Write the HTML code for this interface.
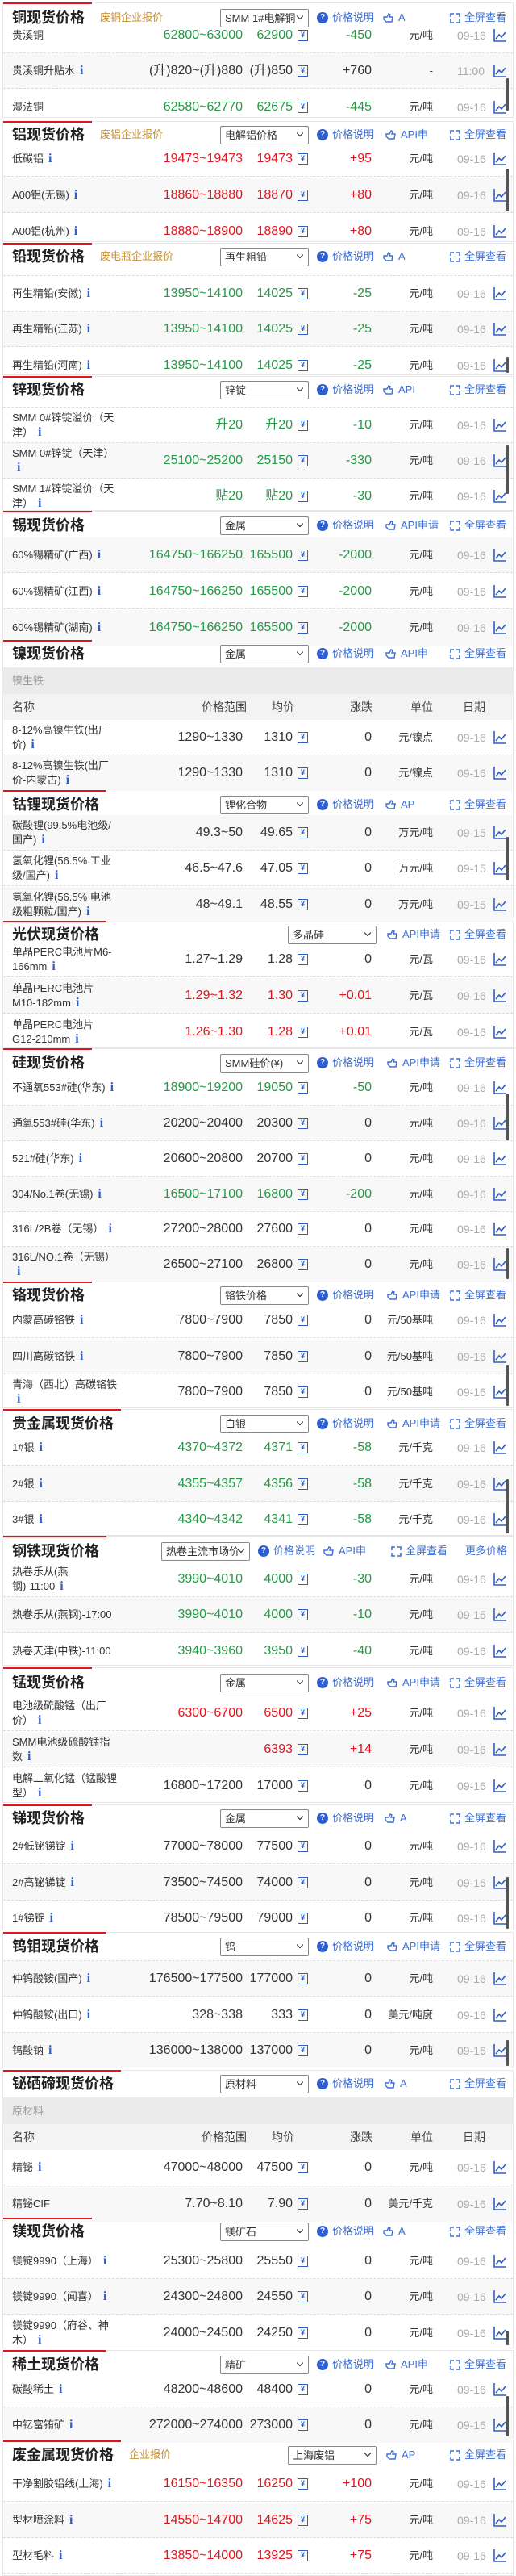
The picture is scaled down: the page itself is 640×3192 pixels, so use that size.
<!DOCTYPE html>
<html><head><meta charset="utf-8">
<style>
*{margin:0;padding:0;box-sizing:border-box}
body{width:640px;height:3192px;position:relative;background:#fff;font-family:"Liberation Sans","Noto Sans CJK SC",sans-serif;color:#333;overflow:hidden}
.s{position:absolute;left:3px;width:634px;border:1px solid #e6e6e6;background:#fff}
.rl{position:absolute;left:4px;height:2px;background:#e3141d;z-index:3}
.t{position:absolute;left:15px;font-size:18px;font-weight:bold;line-height:24px;color:#222;z-index:3}
.o{position:absolute;left:124px;font-size:13px;line-height:20px;color:#c8902e;z-index:3}
.sel{position:absolute;left:273px;width:110px;height:23px;border:1px solid #888;border-radius:2px;font-size:13px;line-height:21px;padding-left:5px;color:#333;background:#fff;z-index:3;overflow:hidden;white-space:nowrap}
.sel:after{content:"";position:absolute;right:7px;top:5px;width:5px;height:5px;border-right:1.5px solid #222;border-bottom:1.5px solid #222;transform:rotate(45deg)}
.lk{position:absolute;font-size:13px;line-height:20px;color:#3d6fd4;white-space:nowrap;z-index:3;display:flex;align-items:center}
.q{display:inline-block;width:14px;height:14px;border-radius:50%;background:#2d5fd0;color:#fff;font-size:10px;font-weight:bold;line-height:14px;text-align:center;font-style:normal;margin-right:5px}
.lk svg{margin-right:5px}
.r{position:absolute;left:4px;width:632px;height:44px;border-bottom:1px dashed #dcdcdc;z-index:1}
.r.b{background:#f8f8f8}
.r.e{border-bottom:none}
.r>div{position:absolute;top:0;height:44px;line-height:44px;white-space:nowrap}
.r .n{left:11px;width:130px;white-space:normal;display:flex;align-items:center;font-size:13px;line-height:18px;color:#333}
.r .p{left:0;width:297px;text-align:right;font-size:16px}
.r .a{left:0;width:359px;text-align:right;font-size:16px}
.r .c{left:0;width:457px;text-align:right;font-size:16px}
.r .u{left:0;width:533px;text-align:right;font-size:13px}
.r .d{left:563px;font-size:14px;color:#aaa}
.g .p,.g .a,.g .c{color:#239a45}
.rd .p,.rd .a,.rd .c{color:#e5121c}
.y{position:absolute;left:365px;top:15px;width:13px;height:14px;border:1.5px solid #2f5fc0;font-size:9px;line-height:11px;text-align:center;color:#2f5fc0;font-style:normal;font-weight:bold}
.k{position:absolute;left:608px;top:14px}
.i{font-family:"Liberation Serif",serif;color:#2f5fc8;font-weight:bold;font-size:16px;margin-left:6px}
.dl{position:absolute;left:4px;width:632px;border-top:1px dashed #dcdcdc;z-index:2}
.sub{position:absolute;left:4px;width:632px;height:33px;background:#ebebeb;font-size:13px;line-height:33px;color:#999;padding-left:11px;z-index:2}
.hd{position:absolute;left:4px;width:632px;height:32px;background:#f3f3f3;font-size:14px;line-height:32px;color:#444;z-index:2}
.hd span{position:absolute;top:0}
.sb{position:absolute;left:628px;width:3px;background:#555;z-index:4;border-radius:1px}
</style></head><body>

<!-- 1 铜 -->
<div class="s" style="top:3px;height:143px"></div>
<div class="rl" style="top:3px;width:110px"></div>
<div class="t" style="top:10px">铜现货价格</div>
<div class="o" style="top:12px">废铜企业报价</div>
<div class="sel" style="top:11px">SMM 1#电解铜</div>
<div class="lk" style="top:12px;left:393px"><i class="q">?</i>价格说明</div>
<div class="lk" style="top:12px;left:475px"><svg width="14" height="14" viewBox="0 0 14 14"><path d="M1 6h4l2-4 2 1-1 3h4l-1 6H4L1 9z" fill="none" stroke="#3d6fd4" stroke-width="1.4"/></svg>A</div>
<div class="lk" style="top:12px;left:558px"><svg width="13" height="13" viewBox="0 0 13 13"><path d="M1 5V1h4M8 1h4v4M12 8v4H8M5 12H1V8" fill="none" stroke="#3d6fd4" stroke-width="1.6"/></svg>全屏查看</div>
<div class="r g" style="top:22px"><div class="n">贵溪铜</div><div class="p">62800~63000</div><div class="a">62900</div><i class="y">¥</i><div class="c">-450</div><div class="u">元/吨</div><div class="d">09-16</div><svg class="k" width="16" height="16" viewBox="0 0 16 16"><path d="M1 0v15h15M3 12l4-5 3 3 5-6" fill="none" stroke="#2f5fc0" stroke-width="1.6"/></svg></div>
<div class="r b" style="top:66px"><div class="n">贵溪铜升贴水<b class="i">i</b></div><div class="p">(升)820~(升)880</div><div class="a">(升)850</div><i class="y">¥</i><div class="c">+760</div><div class="u">-</div><div class="d">11:00</div><svg class="k" width="16" height="16" viewBox="0 0 16 16"><path d="M1 0v15h15M3 12l4-5 3 3 5-6" fill="none" stroke="#2f5fc0" stroke-width="1.6"/></svg></div>
<div class="r g e" style="top:111px"><div class="n">湿法铜</div><div class="p">62580~62770</div><div class="a">62675</div><i class="y">¥</i><div class="c">-445</div><div class="u">元/吨</div><div class="d">09-16</div><svg class="k" width="16" height="16" viewBox="0 0 16 16"><path d="M1 0v15h15M3 12l4-5 3 3 5-6" fill="none" stroke="#2f5fc0" stroke-width="1.6"/></svg></div>
<div class="sb" style="top:97px;height:40px"></div>

<!-- 2 铝 -->
<div class="s" style="top:150px;height:150px"></div>
<div class="rl" style="top:150px;width:110px"></div>
<div class="t" style="top:155px">铝现货价格</div>
<div class="o" style="top:157px">废铝企业报价</div>
<div class="sel" style="top:156px">电解铝价格</div>
<div class="lk" style="top:157px;left:393px"><i class="q">?</i>价格说明</div>
<div class="lk" style="top:157px;left:478px"><svg width="14" height="14" viewBox="0 0 14 14"><path d="M1 6h4l2-4 2 1-1 3h4l-1 6H4L1 9z" fill="none" stroke="#3d6fd4" stroke-width="1.4"/></svg>API申</div>
<div class="lk" style="top:157px;left:558px"><svg width="13" height="13" viewBox="0 0 13 13"><path d="M1 5V1h4M8 1h4v4M12 8v4H8M5 12H1V8" fill="none" stroke="#3d6fd4" stroke-width="1.6"/></svg>全屏查看</div>
<div class="r rd" style="top:175px"><div class="n">低碳铝<b class="i">i</b></div><div class="p">19473~19473</div><div class="a">19473</div><i class="y">¥</i><div class="c">+95</div><div class="u">元/吨</div><div class="d">09-16</div><svg class="k" width="16" height="16" viewBox="0 0 16 16"><path d="M1 0v15h15M3 12l4-5 3 3 5-6" fill="none" stroke="#2f5fc0" stroke-width="1.6"/></svg></div>
<div class="r rd b" style="top:220px"><div class="n">A00铝(无锡)<b class="i">i</b></div><div class="p">18860~18880</div><div class="a">18870</div><i class="y">¥</i><div class="c">+80</div><div class="u">元/吨</div><div class="d">09-16</div><svg class="k" width="16" height="16" viewBox="0 0 16 16"><path d="M1 0v15h15M3 12l4-5 3 3 5-6" fill="none" stroke="#2f5fc0" stroke-width="1.6"/></svg></div>
<div class="r rd e" style="top:265px"><div class="n">A00铝(杭州)<b class="i">i</b></div><div class="p">18880~18900</div><div class="a">18890</div><i class="y">¥</i><div class="c">+80</div><div class="u">元/吨</div><div class="d">09-16</div><svg class="k" width="16" height="16" viewBox="0 0 16 16"><path d="M1 0v15h15M3 12l4-5 3 3 5-6" fill="none" stroke="#2f5fc0" stroke-width="1.6"/></svg></div>
<div class="sb" style="top:209px;height:53px"></div>

<!-- 3 铅 -->
<div class="s" style="top:301px;height:164px"></div>
<div class="rl" style="top:301px;width:110px"></div>
<div class="t" style="top:306px">铅现货价格</div>
<div class="o" style="top:308px">废电瓶企业报价</div>
<div class="sel" style="top:307px">再生粗铅</div>
<div class="lk" style="top:308px;left:393px"><i class="q">?</i>价格说明</div>
<div class="lk" style="top:308px;left:475px"><svg width="14" height="14" viewBox="0 0 14 14"><path d="M1 6h4l2-4 2 1-1 3h4l-1 6H4L1 9z" fill="none" stroke="#3d6fd4" stroke-width="1.4"/></svg>A</div>
<div class="lk" style="top:308px;left:558px"><svg width="13" height="13" viewBox="0 0 13 13"><path d="M1 5V1h4M8 1h4v4M12 8v4H8M5 12H1V8" fill="none" stroke="#3d6fd4" stroke-width="1.6"/></svg>全屏查看</div>
<div class="dl" style="top:341px"></div>
<div class="r g" style="top:342px"><div class="n">再生精铅(安徽)<b class="i">i</b></div><div class="p">13950~14100</div><div class="a">14025</div><i class="y">¥</i><div class="c">-25</div><div class="u">元/吨</div><div class="d">09-16</div><svg class="k" width="16" height="16" viewBox="0 0 16 16"><path d="M1 0v15h15M3 12l4-5 3 3 5-6" fill="none" stroke="#2f5fc0" stroke-width="1.6"/></svg></div>
<div class="r g b" style="top:386px"><div class="n">再生精铅(江苏)<b class="i">i</b></div><div class="p">13950~14100</div><div class="a">14025</div><i class="y">¥</i><div class="c">-25</div><div class="u">元/吨</div><div class="d">09-16</div><svg class="k" width="16" height="16" viewBox="0 0 16 16"><path d="M1 0v15h15M3 12l4-5 3 3 5-6" fill="none" stroke="#2f5fc0" stroke-width="1.6"/></svg></div>
<div class="r g e" style="top:431px"><div class="n">再生精铅(河南)<b class="i">i</b></div><div class="p">13950~14100</div><div class="a">14025</div><i class="y">¥</i><div class="c">-25</div><div class="u">元/吨</div><div class="d">09-16</div><svg class="k" width="16" height="16" viewBox="0 0 16 16"><path d="M1 0v15h15M3 12l4-5 3 3 5-6" fill="none" stroke="#2f5fc0" stroke-width="1.6"/></svg></div>
<div class="sb" style="top:442px;height:20px"></div>

<!-- 4 锌 -->
<div class="s" style="top:466px;height:167px"></div>
<div class="rl" style="top:466px;width:110px"></div>
<div class="t" style="top:471px">锌现货价格</div>
<div class="sel" style="top:472px">锌锭</div>
<div class="lk" style="top:473px;left:393px"><i class="q">?</i>价格说明</div>
<div class="lk" style="top:473px;left:475px"><svg width="14" height="14" viewBox="0 0 14 14"><path d="M1 6h4l2-4 2 1-1 3h4l-1 6H4L1 9z" fill="none" stroke="#3d6fd4" stroke-width="1.4"/></svg>API</div>
<div class="lk" style="top:473px;left:558px"><svg width="13" height="13" viewBox="0 0 13 13"><path d="M1 5V1h4M8 1h4v4M12 8v4H8M5 12H1V8" fill="none" stroke="#3d6fd4" stroke-width="1.6"/></svg>全屏查看</div>
<div class="dl" style="top:504px"></div>
<div class="r g" style="top:505px"><div class="n"><span>SMM 0#锌锭溢价（天津）<b class="i">i</b></span></div><div class="p">升20</div><div class="a">升20</div><i class="y">¥</i><div class="c">-10</div><div class="u">元/吨</div><div class="d">09-16</div><svg class="k" width="16" height="16" viewBox="0 0 16 16"><path d="M1 0v15h15M3 12l4-5 3 3 5-6" fill="none" stroke="#2f5fc0" stroke-width="1.6"/></svg></div>
<div class="r g b" style="top:549px"><div class="n"><span>SMM 0#锌锭（天津）<b class="i">i</b></span></div><div class="p">25100~25200</div><div class="a">25150</div><i class="y">¥</i><div class="c">-330</div><div class="u">元/吨</div><div class="d">09-16</div><svg class="k" width="16" height="16" viewBox="0 0 16 16"><path d="M1 0v15h15M3 12l4-5 3 3 5-6" fill="none" stroke="#2f5fc0" stroke-width="1.6"/></svg></div>
<div class="r g e" style="top:593px"><div class="n"><span>SMM 1#锌锭溢价（天津）<b class="i">i</b></span></div><div class="p">贴20</div><div class="a">贴20</div><i class="y">¥</i><div class="c">-30</div><div class="u">元/吨</div><div class="d">09-16</div><svg class="k" width="16" height="16" viewBox="0 0 16 16"><path d="M1 0v15h15M3 12l4-5 3 3 5-6" fill="none" stroke="#2f5fc0" stroke-width="1.6"/></svg></div>
<div class="sb" style="top:552px;height:60px"></div>

<!-- 5 锡 -->
<div class="s" style="top:633px;height:160px"></div>
<div class="rl" style="top:633px;width:110px"></div>
<div class="t" style="top:639px">锡现货价格</div>
<div class="sel" style="top:640px">金属</div>
<div class="lk" style="top:641px;left:393px"><i class="q">?</i>价格说明</div>
<div class="lk" style="top:641px;left:478px"><svg width="14" height="14" viewBox="0 0 14 14"><path d="M1 6h4l2-4 2 1-1 3h4l-1 6H4L1 9z" fill="none" stroke="#3d6fd4" stroke-width="1.4"/></svg>API申请</div>
<div class="lk" style="top:641px;left:558px"><svg width="13" height="13" viewBox="0 0 13 13"><path d="M1 5V1h4M8 1h4v4M12 8v4H8M5 12H1V8" fill="none" stroke="#3d6fd4" stroke-width="1.6"/></svg>全屏查看</div>
<div class="r g b" style="top:666px"><div class="n">60%锡精矿(广西)<b class="i">i</b></div><div class="p">164750~166250</div><div class="a">165500</div><i class="y">¥</i><div class="c">-2000</div><div class="u">元/吨</div><div class="d">09-16</div><svg class="k" width="16" height="16" viewBox="0 0 16 16"><path d="M1 0v15h15M3 12l4-5 3 3 5-6" fill="none" stroke="#2f5fc0" stroke-width="1.6"/></svg></div>
<div class="r g" style="top:711px"><div class="n">60%锡精矿(江西)<b class="i">i</b></div><div class="p">164750~166250</div><div class="a">165500</div><i class="y">¥</i><div class="c">-2000</div><div class="u">元/吨</div><div class="d">09-16</div><svg class="k" width="16" height="16" viewBox="0 0 16 16"><path d="M1 0v15h15M3 12l4-5 3 3 5-6" fill="none" stroke="#2f5fc0" stroke-width="1.6"/></svg></div>
<div class="r g b e" style="top:756px"><div class="n">60%锡精矿(湖南)<b class="i">i</b></div><div class="p">164750~166250</div><div class="a">165500</div><i class="y">¥</i><div class="c">-2000</div><div class="u">元/吨</div><div class="d">09-16</div><svg class="k" width="16" height="16" viewBox="0 0 16 16"><path d="M1 0v15h15M3 12l4-5 3 3 5-6" fill="none" stroke="#2f5fc0" stroke-width="1.6"/></svg></div>

<!-- 6 镍 -->
<div class="s" style="top:793px;height:186px"></div>
<div class="rl" style="top:793px;width:110px"></div>
<div class="t" style="top:798px">镍现货价格</div>
<div class="sel" style="top:799px">金属</div>
<div class="lk" style="top:800px;left:393px"><i class="q">?</i>价格说明</div>
<div class="lk" style="top:800px;left:478px"><svg width="14" height="14" viewBox="0 0 14 14"><path d="M1 6h4l2-4 2 1-1 3h4l-1 6H4L1 9z" fill="none" stroke="#3d6fd4" stroke-width="1.4"/></svg>API申</div>
<div class="lk" style="top:800px;left:558px"><svg width="13" height="13" viewBox="0 0 13 13"><path d="M1 5V1h4M8 1h4v4M12 8v4H8M5 12H1V8" fill="none" stroke="#3d6fd4" stroke-width="1.6"/></svg>全屏查看</div>
<div class="sub" style="top:827px">镍生铁</div>
<div class="hd" style="top:860px"><span style="left:11px">名称</span><span style="left:246px">价格范围</span><span style="left:333px">均价</span><span style="left:430px">涨跌</span><span style="left:505px">单位</span><span style="left:570px">日期</span></div>
<div class="r" style="top:892px"><div class="n"><span>8-12%高镍生铁(出厂价)<b class="i">i</b></span></div><div class="p">1290~1330</div><div class="a">1310</div><i class="y">¥</i><div class="c">0</div><div class="u">元/镍点</div><div class="d">09-16</div><svg class="k" width="16" height="16" viewBox="0 0 16 16"><path d="M1 0v15h15M3 12l4-5 3 3 5-6" fill="none" stroke="#2f5fc0" stroke-width="1.6"/></svg></div>
<div class="r b e" style="top:936px"><div class="n"><span>8-12%高镍生铁(出厂价-内蒙古)<b class="i">i</b></span></div><div class="p">1290~1330</div><div class="a">1310</div><i class="y">¥</i><div class="c">0</div><div class="u">元/镍点</div><div class="d">09-16</div><svg class="k" width="16" height="16" viewBox="0 0 16 16"><path d="M1 0v15h15M3 12l4-5 3 3 5-6" fill="none" stroke="#2f5fc0" stroke-width="1.6"/></svg></div>

<!-- 7 钴锂 -->
<div class="s" style="top:979px;height:158px"></div>
<div class="rl" style="top:979px;width:128px"></div>
<div class="t" style="top:985px">钴锂现货价格</div>
<div class="sel" style="top:986px">锂化合物</div>
<div class="lk" style="top:987px;left:393px"><i class="q">?</i>价格说明</div>
<div class="lk" style="top:987px;left:478px"><svg width="14" height="14" viewBox="0 0 14 14"><path d="M1 6h4l2-4 2 1-1 3h4l-1 6H4L1 9z" fill="none" stroke="#3d6fd4" stroke-width="1.4"/></svg>AP</div>
<div class="lk" style="top:987px;left:558px"><svg width="13" height="13" viewBox="0 0 13 13"><path d="M1 5V1h4M8 1h4v4M12 8v4H8M5 12H1V8" fill="none" stroke="#3d6fd4" stroke-width="1.6"/></svg>全屏查看</div>
<div class="r b" style="top:1010px"><div class="n"><span>碳酸锂(99.5%电池级/国产)<b class="i">i</b></span></div><div class="p">49.3~50</div><div class="a">49.65</div><i class="y">¥</i><div class="c">0</div><div class="u">万元/吨</div><div class="d">09-15</div><svg class="k" width="16" height="16" viewBox="0 0 16 16"><path d="M1 0v15h15M3 12l4-5 3 3 5-6" fill="none" stroke="#2f5fc0" stroke-width="1.6"/></svg></div>
<div class="r" style="top:1054px"><div class="n"><span>氢氧化锂(56.5% 工业级/国产)<b class="i">i</b></span></div><div class="p">46.5~47.6</div><div class="a">47.05</div><i class="y">¥</i><div class="c">0</div><div class="u">万元/吨</div><div class="d">09-15</div><svg class="k" width="16" height="16" viewBox="0 0 16 16"><path d="M1 0v15h15M3 12l4-5 3 3 5-6" fill="none" stroke="#2f5fc0" stroke-width="1.6"/></svg></div>
<div class="r b e" style="top:1099px"><div class="n"><span>氢氧化锂(56.5% 电池级粗颗粒/国产)<b class="i">i</b></span></div><div class="p">48~49.1</div><div class="a">48.55</div><i class="y">¥</i><div class="c">0</div><div class="u">万元/吨</div><div class="d">09-15</div><svg class="k" width="16" height="16" viewBox="0 0 16 16"><path d="M1 0v15h15M3 12l4-5 3 3 5-6" fill="none" stroke="#2f5fc0" stroke-width="1.6"/></svg></div>
<div class="sb" style="top:1037px;height:54px"></div>

<!-- 8 光伏 -->
<div class="s" style="top:1141px;height:157px"></div>
<div class="rl" style="top:1141px;width:128px"></div>
<div class="t" style="top:1146px">光伏现货价格</div>
<div class="sel" style="top:1147px;left:357px">多晶硅</div>
<div class="lk" style="top:1148px;left:480px"><svg width="14" height="14" viewBox="0 0 14 14"><path d="M1 6h4l2-4 2 1-1 3h4l-1 6H4L1 9z" fill="none" stroke="#3d6fd4" stroke-width="1.4"/></svg>API申请</div>
<div class="lk" style="top:1148px;left:558px"><svg width="13" height="13" viewBox="0 0 13 13"><path d="M1 5V1h4M8 1h4v4M12 8v4H8M5 12H1V8" fill="none" stroke="#3d6fd4" stroke-width="1.6"/></svg>全屏查看</div>
<div class="r" style="top:1167px"><div class="n"><span>单晶PERC电池片M6-166mm<b class="i">i</b></span></div><div class="p">1.27~1.29</div><div class="a">1.28</div><i class="y">¥</i><div class="c">0</div><div class="u">元/瓦</div><div class="d">09-16</div><svg class="k" width="16" height="16" viewBox="0 0 16 16"><path d="M1 0v15h15M3 12l4-5 3 3 5-6" fill="none" stroke="#2f5fc0" stroke-width="1.6"/></svg></div>
<div class="r rd b" style="top:1212px"><div class="n"><span>单晶PERC电池片M10-182mm<b class="i">i</b></span></div><div class="p">1.29~1.32</div><div class="a">1.30</div><i class="y">¥</i><div class="c">+0.01</div><div class="u">元/瓦</div><div class="d">09-16</div><svg class="k" width="16" height="16" viewBox="0 0 16 16"><path d="M1 0v15h15M3 12l4-5 3 3 5-6" fill="none" stroke="#2f5fc0" stroke-width="1.6"/></svg></div>
<div class="r rd e" style="top:1257px"><div class="n"><span>单晶PERC电池片G12-210mm<b class="i">i</b></span></div><div class="p">1.26~1.30</div><div class="a">1.28</div><i class="y">¥</i><div class="c">+0.01</div><div class="u">元/瓦</div><div class="d">09-16</div><svg class="k" width="16" height="16" viewBox="0 0 16 16"><path d="M1 0v15h15M3 12l4-5 3 3 5-6" fill="none" stroke="#2f5fc0" stroke-width="1.6"/></svg></div>

<!-- 9 硅 -->
<div class="s" style="top:1299px;height:288px"></div>
<div class="rl" style="top:1299px;width:110px"></div>
<div class="t" style="top:1305px">硅现货价格</div>
<div class="sel" style="top:1306px">SMM硅价(¥)</div>
<div class="lk" style="top:1307px;left:393px"><i class="q">?</i>价格说明</div>
<div class="lk" style="top:1307px;left:480px"><svg width="14" height="14" viewBox="0 0 14 14"><path d="M1 6h4l2-4 2 1-1 3h4l-1 6H4L1 9z" fill="none" stroke="#3d6fd4" stroke-width="1.4"/></svg>API申请</div>
<div class="lk" style="top:1307px;left:558px"><svg width="13" height="13" viewBox="0 0 13 13"><path d="M1 5V1h4M8 1h4v4M12 8v4H8M5 12H1V8" fill="none" stroke="#3d6fd4" stroke-width="1.6"/></svg>全屏查看</div>
<div class="r g" style="top:1326px"><div class="n"><span>不通氧553#硅(华东)<b class="i">i</b></span></div><div class="p">18900~19200</div><div class="a">19050</div><i class="y">¥</i><div class="c">-50</div><div class="u">元/吨</div><div class="d">09-16</div><svg class="k" width="16" height="16" viewBox="0 0 16 16"><path d="M1 0v15h15M3 12l4-5 3 3 5-6" fill="none" stroke="#2f5fc0" stroke-width="1.6"/></svg></div>
<div class="r b" style="top:1370px"><div class="n">通氧553#硅(华东)<b class="i">i</b></div><div class="p">20200~20400</div><div class="a">20300</div><i class="y">¥</i><div class="c">0</div><div class="u">元/吨</div><div class="d">09-16</div><svg class="k" width="16" height="16" viewBox="0 0 16 16"><path d="M1 0v15h15M3 12l4-5 3 3 5-6" fill="none" stroke="#2f5fc0" stroke-width="1.6"/></svg></div>
<div class="r" style="top:1414px"><div class="n">521#硅(华东)<b class="i">i</b></div><div class="p">20600~20800</div><div class="a">20700</div><i class="y">¥</i><div class="c">0</div><div class="u">元/吨</div><div class="d">09-16</div><svg class="k" width="16" height="16" viewBox="0 0 16 16"><path d="M1 0v15h15M3 12l4-5 3 3 5-6" fill="none" stroke="#2f5fc0" stroke-width="1.6"/></svg></div>
<div class="r g b" style="top:1458px"><div class="n">304/No.1卷(无锡)<b class="i">i</b></div><div class="p">16500~17100</div><div class="a">16800</div><i class="y">¥</i><div class="c">-200</div><div class="u">元/吨</div><div class="d">09-16</div><svg class="k" width="16" height="16" viewBox="0 0 16 16"><path d="M1 0v15h15M3 12l4-5 3 3 5-6" fill="none" stroke="#2f5fc0" stroke-width="1.6"/></svg></div>
<div class="r" style="top:1501px"><div class="n"><span>316L/2B卷（无锡）<b class="i">i</b></span></div><div class="p">27200~28000</div><div class="a">27600</div><i class="y">¥</i><div class="c">0</div><div class="u">元/吨</div><div class="d">09-16</div><svg class="k" width="16" height="16" viewBox="0 0 16 16"><path d="M1 0v15h15M3 12l4-5 3 3 5-6" fill="none" stroke="#2f5fc0" stroke-width="1.6"/></svg></div>
<div class="r b e" style="top:1545px"><div class="n"><span>316L/NO.1卷（无锡）<b class="i">i</b></span></div><div class="p">26500~27100</div><div class="a">26800</div><i class="y">¥</i><div class="c">0</div><div class="u">元/吨</div><div class="d">09-16</div><svg class="k" width="16" height="16" viewBox="0 0 16 16"><path d="M1 0v15h15M3 12l4-5 3 3 5-6" fill="none" stroke="#2f5fc0" stroke-width="1.6"/></svg></div>
<div class="sb" style="top:1355px;height:58px"></div>
<div class="sb" style="top:1547px;height:38px"></div>

<!-- 10 铬 -->
<div class="s" style="top:1588px;height:157px"></div>
<div class="rl" style="top:1588px;width:110px"></div>
<div class="t" style="top:1593px">铬现货价格</div>
<div class="sel" style="top:1594px">铬铁价格</div>
<div class="lk" style="top:1595px;left:393px"><i class="q">?</i>价格说明</div>
<div class="lk" style="top:1595px;left:480px"><svg width="14" height="14" viewBox="0 0 14 14"><path d="M1 6h4l2-4 2 1-1 3h4l-1 6H4L1 9z" fill="none" stroke="#3d6fd4" stroke-width="1.4"/></svg>API申请</div>
<div class="lk" style="top:1595px;left:558px"><svg width="13" height="13" viewBox="0 0 13 13"><path d="M1 5V1h4M8 1h4v4M12 8v4H8M5 12H1V8" fill="none" stroke="#3d6fd4" stroke-width="1.6"/></svg>全屏查看</div>
<div class="r" style="top:1614px"><div class="n">内蒙高碳铬铁<b class="i">i</b></div><div class="p">7800~7900</div><div class="a">7850</div><i class="y">¥</i><div class="c">0</div><div class="u">元/50基吨</div><div class="d">09-16</div><svg class="k" width="16" height="16" viewBox="0 0 16 16"><path d="M1 0v15h15M3 12l4-5 3 3 5-6" fill="none" stroke="#2f5fc0" stroke-width="1.6"/></svg></div>
<div class="r b" style="top:1659px"><div class="n">四川高碳铬铁<b class="i">i</b></div><div class="p">7800~7900</div><div class="a">7850</div><i class="y">¥</i><div class="c">0</div><div class="u">元/50基吨</div><div class="d">09-16</div><svg class="k" width="16" height="16" viewBox="0 0 16 16"><path d="M1 0v15h15M3 12l4-5 3 3 5-6" fill="none" stroke="#2f5fc0" stroke-width="1.6"/></svg></div>
<div class="r e" style="top:1703px"><div class="n"><span>青海（西北）高碳铬铁<b class="i">i</b></span></div><div class="p">7800~7900</div><div class="a">7850</div><i class="y">¥</i><div class="c">0</div><div class="u">元/50基吨</div><div class="d">09-16</div><svg class="k" width="16" height="16" viewBox="0 0 16 16"><path d="M1 0v15h15M3 12l4-5 3 3 5-6" fill="none" stroke="#2f5fc0" stroke-width="1.6"/></svg></div>
<div class="sb" style="top:1692px;height:50px"></div>

<!-- 11 贵金属 -->
<div class="s" style="top:1746px;height:157px"></div>
<div class="rl" style="top:1746px;width:146px"></div>
<div class="t" style="top:1752px">贵金属现货价格</div>
<div class="sel" style="top:1753px">白银</div>
<div class="lk" style="top:1754px;left:393px"><i class="q">?</i>价格说明</div>
<div class="lk" style="top:1754px;left:480px"><svg width="14" height="14" viewBox="0 0 14 14"><path d="M1 6h4l2-4 2 1-1 3h4l-1 6H4L1 9z" fill="none" stroke="#3d6fd4" stroke-width="1.4"/></svg>API申请</div>
<div class="lk" style="top:1754px;left:558px"><svg width="13" height="13" viewBox="0 0 13 13"><path d="M1 5V1h4M8 1h4v4M12 8v4H8M5 12H1V8" fill="none" stroke="#3d6fd4" stroke-width="1.6"/></svg>全屏查看</div>
<div class="r g" style="top:1772px"><div class="n">1#银<b class="i">i</b></div><div class="p">4370~4372</div><div class="a">4371</div><i class="y">¥</i><div class="c">-58</div><div class="u">元/千克</div><div class="d">09-16</div><svg class="k" width="16" height="16" viewBox="0 0 16 16"><path d="M1 0v15h15M3 12l4-5 3 3 5-6" fill="none" stroke="#2f5fc0" stroke-width="1.6"/></svg></div>
<div class="r g b" style="top:1817px"><div class="n">2#银<b class="i">i</b></div><div class="p">4355~4357</div><div class="a">4356</div><i class="y">¥</i><div class="c">-58</div><div class="u">元/千克</div><div class="d">09-16</div><svg class="k" width="16" height="16" viewBox="0 0 16 16"><path d="M1 0v15h15M3 12l4-5 3 3 5-6" fill="none" stroke="#2f5fc0" stroke-width="1.6"/></svg></div>
<div class="r g e" style="top:1861px"><div class="n">3#银<b class="i">i</b></div><div class="p">4340~4342</div><div class="a">4341</div><i class="y">¥</i><div class="c">-58</div><div class="u">元/千克</div><div class="d">09-16</div><svg class="k" width="16" height="16" viewBox="0 0 16 16"><path d="M1 0v15h15M3 12l4-5 3 3 5-6" fill="none" stroke="#2f5fc0" stroke-width="1.6"/></svg></div>
<div class="sb" style="top:1833px;height:67px"></div>

<!-- 12 钢铁 -->
<div class="s" style="top:1903px;height:161px"></div>
<div class="rl" style="top:1903px;width:128px"></div>
<div class="t" style="top:1910px">钢铁现货价格</div>
<div class="sel" style="top:1911px;left:200px;padding-right:18px">热卷主流市场价</div>
<div class="lk" style="top:1912px;left:320px"><i class="q">?</i>价格说明</div>
<div class="lk" style="top:1912px;left:401px"><svg width="14" height="14" viewBox="0 0 14 14"><path d="M1 6h4l2-4 2 1-1 3h4l-1 6H4L1 9z" fill="none" stroke="#3d6fd4" stroke-width="1.4"/></svg>API申</div>
<div class="lk" style="top:1912px;left:485px"><svg width="13" height="13" viewBox="0 0 13 13"><path d="M1 5V1h4M8 1h4v4M12 8v4H8M5 12H1V8" fill="none" stroke="#3d6fd4" stroke-width="1.6"/></svg>全屏查看</div>
<div class="lk" style="top:1912px;left:577px">更多价格</div>
<div class="r g" style="top:1935px"><div class="n"><span>热卷乐从(燕钢)-11:00<b class="i">i</b></span></div><div class="p">3990~4010</div><div class="a">4000</div><i class="y">¥</i><div class="c">-30</div><div class="u">元/吨</div><div class="d">09-16</div><svg class="k" width="16" height="16" viewBox="0 0 16 16"><path d="M1 0v15h15M3 12l4-5 3 3 5-6" fill="none" stroke="#2f5fc0" stroke-width="1.6"/></svg></div>
<div class="r g b" style="top:1979px"><div class="n" style="width:150px">热卷乐从(燕钢)-17:00</div><div class="p">3990~4010</div><div class="a">4000</div><i class="y">¥</i><div class="c">-10</div><div class="u">元/吨</div><div class="d">09-15</div><svg class="k" width="16" height="16" viewBox="0 0 16 16"><path d="M1 0v15h15M3 12l4-5 3 3 5-6" fill="none" stroke="#2f5fc0" stroke-width="1.6"/></svg></div>
<div class="r g e" style="top:2024px"><div class="n" style="width:150px">热卷天津(中铁)-11:00</div><div class="p">3940~3960</div><div class="a">3950</div><i class="y">¥</i><div class="c">-40</div><div class="u">元/吨</div><div class="d">09-16</div><svg class="k" width="16" height="16" viewBox="0 0 16 16"><path d="M1 0v15h15M3 12l4-5 3 3 5-6" fill="none" stroke="#2f5fc0" stroke-width="1.6"/></svg></div>

<!-- 13 锰 -->
<div class="s" style="top:2066px;height:168px"></div>
<div class="rl" style="top:2066px;width:110px"></div>
<div class="t" style="top:2073px">锰现货价格</div>
<div class="sel" style="top:2074px">金属</div>
<div class="lk" style="top:2075px;left:393px"><i class="q">?</i>价格说明</div>
<div class="lk" style="top:2075px;left:480px"><svg width="14" height="14" viewBox="0 0 14 14"><path d="M1 6h4l2-4 2 1-1 3h4l-1 6H4L1 9z" fill="none" stroke="#3d6fd4" stroke-width="1.4"/></svg>API申请</div>
<div class="lk" style="top:2075px;left:558px"><svg width="13" height="13" viewBox="0 0 13 13"><path d="M1 5V1h4M8 1h4v4M12 8v4H8M5 12H1V8" fill="none" stroke="#3d6fd4" stroke-width="1.6"/></svg>全屏查看</div>
<div class="r rd" style="top:2101px"><div class="n"><span>电池级硫酸锰（出厂价）<b class="i">i</b></span></div><div class="p">6300~6700</div><div class="a">6500</div><i class="y">¥</i><div class="c">+25</div><div class="u">元/吨</div><div class="d">09-16</div><svg class="k" width="16" height="16" viewBox="0 0 16 16"><path d="M1 0v15h15M3 12l4-5 3 3 5-6" fill="none" stroke="#2f5fc0" stroke-width="1.6"/></svg></div>
<div class="r rd b" style="top:2146px"><div class="n"><span>SMM电池级硫酸锰指数<b class="i">i</b></span></div><div class="p"></div><div class="a">6393</div><i class="y">¥</i><div class="c">+14</div><div class="u">元/吨</div><div class="d">09-16</div><svg class="k" width="16" height="16" viewBox="0 0 16 16"><path d="M1 0v15h15M3 12l4-5 3 3 5-6" fill="none" stroke="#2f5fc0" stroke-width="1.6"/></svg></div>
<div class="r e" style="top:2191px"><div class="n"><span>电解二氧化锰（锰酸锂型）<b class="i">i</b></span></div><div class="p">16800~17200</div><div class="a">17000</div><i class="y">¥</i><div class="c">0</div><div class="u">元/吨</div><div class="d">09-16</div><svg class="k" width="16" height="16" viewBox="0 0 16 16"><path d="M1 0v15h15M3 12l4-5 3 3 5-6" fill="none" stroke="#2f5fc0" stroke-width="1.6"/></svg></div>

<!-- 14 锑 -->
<div class="s" style="top:2236px;height:156px"></div>
<div class="rl" style="top:2236px;width:110px"></div>
<div class="t" style="top:2241px">锑现货价格</div>
<div class="sel" style="top:2242px">金属</div>
<div class="lk" style="top:2243px;left:393px"><i class="q">?</i>价格说明</div>
<div class="lk" style="top:2243px;left:477px"><svg width="14" height="14" viewBox="0 0 14 14"><path d="M1 6h4l2-4 2 1-1 3h4l-1 6H4L1 9z" fill="none" stroke="#3d6fd4" stroke-width="1.4"/></svg>A</div>
<div class="lk" style="top:2243px;left:558px"><svg width="13" height="13" viewBox="0 0 13 13"><path d="M1 5V1h4M8 1h4v4M12 8v4H8M5 12H1V8" fill="none" stroke="#3d6fd4" stroke-width="1.6"/></svg>全屏查看</div>
<div class="r" style="top:2266px"><div class="n">2#低铋锑锭<b class="i">i</b></div><div class="p">77000~78000</div><div class="a">77500</div><i class="y">¥</i><div class="c">0</div><div class="u">元/吨</div><div class="d">09-16</div><svg class="k" width="16" height="16" viewBox="0 0 16 16"><path d="M1 0v15h15M3 12l4-5 3 3 5-6" fill="none" stroke="#2f5fc0" stroke-width="1.6"/></svg></div>
<div class="r b" style="top:2311px"><div class="n">2#高铋锑锭<b class="i">i</b></div><div class="p">73500~74500</div><div class="a">74000</div><i class="y">¥</i><div class="c">0</div><div class="u">元/吨</div><div class="d">09-16</div><svg class="k" width="16" height="16" viewBox="0 0 16 16"><path d="M1 0v15h15M3 12l4-5 3 3 5-6" fill="none" stroke="#2f5fc0" stroke-width="1.6"/></svg></div>
<div class="r e" style="top:2355px"><div class="n">1#锑锭<b class="i">i</b></div><div class="p">78500~79500</div><div class="a">79000</div><i class="y">¥</i><div class="c">0</div><div class="u">元/吨</div><div class="d">09-16</div><svg class="k" width="16" height="16" viewBox="0 0 16 16"><path d="M1 0v15h15M3 12l4-5 3 3 5-6" fill="none" stroke="#2f5fc0" stroke-width="1.6"/></svg></div>
<div class="sb" style="top:2326px;height:64px"></div>

<!-- 15 钨钼 -->
<div class="s" style="top:2394px;height:168px"></div>
<div class="rl" style="top:2394px;width:128px"></div>
<div class="t" style="top:2400px">钨钼现货价格</div>
<div class="sel" style="top:2401px">钨</div>
<div class="lk" style="top:2402px;left:393px"><i class="q">?</i>价格说明</div>
<div class="lk" style="top:2402px;left:480px"><svg width="14" height="14" viewBox="0 0 14 14"><path d="M1 6h4l2-4 2 1-1 3h4l-1 6H4L1 9z" fill="none" stroke="#3d6fd4" stroke-width="1.4"/></svg>API申请</div>
<div class="lk" style="top:2402px;left:558px"><svg width="13" height="13" viewBox="0 0 13 13"><path d="M1 5V1h4M8 1h4v4M12 8v4H8M5 12H1V8" fill="none" stroke="#3d6fd4" stroke-width="1.6"/></svg>全屏查看</div>
<div class="dl" style="top:2429px"></div>
<div class="r b" style="top:2430px"><div class="n">仲钨酸铵(国产)<b class="i">i</b></div><div class="p">176500~177500</div><div class="a">177000</div><i class="y">¥</i><div class="c">0</div><div class="u">元/吨</div><div class="d">09-16</div><svg class="k" width="16" height="16" viewBox="0 0 16 16"><path d="M1 0v15h15M3 12l4-5 3 3 5-6" fill="none" stroke="#2f5fc0" stroke-width="1.6"/></svg></div>
<div class="r" style="top:2475px"><div class="n">仲钨酸铵(出口)<b class="i">i</b></div><div class="p">328~338</div><div class="a">333</div><i class="y">¥</i><div class="c">0</div><div class="u">美元/吨度</div><div class="d">09-16</div><svg class="k" width="16" height="16" viewBox="0 0 16 16"><path d="M1 0v15h15M3 12l4-5 3 3 5-6" fill="none" stroke="#2f5fc0" stroke-width="1.6"/></svg></div>
<div class="r b e" style="top:2519px"><div class="n">钨酸钠<b class="i">i</b></div><div class="p">136000~138000</div><div class="a">137000</div><i class="y">¥</i><div class="c">0</div><div class="u">元/吨</div><div class="d">09-16</div><svg class="k" width="16" height="16" viewBox="0 0 16 16"><path d="M1 0v15h15M3 12l4-5 3 3 5-6" fill="none" stroke="#2f5fc0" stroke-width="1.6"/></svg></div>
<div class="sb" style="top:2528px;height:32px"></div>

<!-- 16 铋硒碲 -->
<div class="s" style="top:2565px;height:182px"></div>
<div class="rl" style="top:2565px;width:146px"></div>
<div class="t" style="top:2570px">铋硒碲现货价格</div>
<div class="sel" style="top:2571px">原材料</div>
<div class="lk" style="top:2572px;left:393px"><i class="q">?</i>价格说明</div>
<div class="lk" style="top:2572px;left:477px"><svg width="14" height="14" viewBox="0 0 14 14"><path d="M1 6h4l2-4 2 1-1 3h4l-1 6H4L1 9z" fill="none" stroke="#3d6fd4" stroke-width="1.4"/></svg>A</div>
<div class="lk" style="top:2572px;left:558px"><svg width="13" height="13" viewBox="0 0 13 13"><path d="M1 5V1h4M8 1h4v4M12 8v4H8M5 12H1V8" fill="none" stroke="#3d6fd4" stroke-width="1.6"/></svg>全屏查看</div>
<div class="sub" style="top:2599px">原材料</div>
<div class="hd" style="top:2632px"><span style="left:11px">名称</span><span style="left:246px">价格范围</span><span style="left:333px">均价</span><span style="left:430px">涨跌</span><span style="left:505px">单位</span><span style="left:570px">日期</span></div>
<div class="r" style="top:2664px"><div class="n">精铋<b class="i">i</b></div><div class="p">47000~48000</div><div class="a">47500</div><i class="y">¥</i><div class="c">0</div><div class="u">元/吨</div><div class="d">09-16</div><svg class="k" width="16" height="16" viewBox="0 0 16 16"><path d="M1 0v15h15M3 12l4-5 3 3 5-6" fill="none" stroke="#2f5fc0" stroke-width="1.6"/></svg></div>
<div class="r b e" style="top:2709px"><div class="n">精铋CIF</div><div class="p">7.70~8.10</div><div class="a">7.90</div><i class="y">¥</i><div class="c">0</div><div class="u">美元/千克</div><div class="d">09-16</div><svg class="k" width="16" height="16" viewBox="0 0 16 16"><path d="M1 0v15h15M3 12l4-5 3 3 5-6" fill="none" stroke="#2f5fc0" stroke-width="1.6"/></svg></div>

<!-- 17 镁 -->
<div class="s" style="top:2748px;height:162px"></div>
<div class="rl" style="top:2748px;width:110px"></div>
<div class="t" style="top:2753px">镁现货价格</div>
<div class="sel" style="top:2754px">镁矿石</div>
<div class="lk" style="top:2755px;left:393px"><i class="q">?</i>价格说明</div>
<div class="lk" style="top:2755px;left:475px"><svg width="14" height="14" viewBox="0 0 14 14"><path d="M1 6h4l2-4 2 1-1 3h4l-1 6H4L1 9z" fill="none" stroke="#3d6fd4" stroke-width="1.4"/></svg>A</div>
<div class="lk" style="top:2755px;left:558px"><svg width="13" height="13" viewBox="0 0 13 13"><path d="M1 5V1h4M8 1h4v4M12 8v4H8M5 12H1V8" fill="none" stroke="#3d6fd4" stroke-width="1.6"/></svg>全屏查看</div>
<div class="r" style="top:2780px"><div class="n" style="width:140px">镁锭9990（上海）<b class="i">i</b></div><div class="p">25300~25800</div><div class="a">25550</div><i class="y">¥</i><div class="c">0</div><div class="u">元/吨</div><div class="d">09-16</div><svg class="k" width="16" height="16" viewBox="0 0 16 16"><path d="M1 0v15h15M3 12l4-5 3 3 5-6" fill="none" stroke="#2f5fc0" stroke-width="1.6"/></svg></div>
<div class="r b" style="top:2824px"><div class="n" style="width:140px">镁锭9990（闻喜）<b class="i">i</b></div><div class="p">24300~24800</div><div class="a">24550</div><i class="y">¥</i><div class="c">0</div><div class="u">元/吨</div><div class="d">09-16</div><svg class="k" width="16" height="16" viewBox="0 0 16 16"><path d="M1 0v15h15M3 12l4-5 3 3 5-6" fill="none" stroke="#2f5fc0" stroke-width="1.6"/></svg></div>
<div class="r e" style="top:2869px"><div class="n"><span>镁锭9990（府谷、神木）<b class="i">i</b></span></div><div class="p">24000~24500</div><div class="a">24250</div><i class="y">¥</i><div class="c">0</div><div class="u">元/吨</div><div class="d">09-16</div><svg class="k" width="16" height="16" viewBox="0 0 16 16"><path d="M1 0v15h15M3 12l4-5 3 3 5-6" fill="none" stroke="#2f5fc0" stroke-width="1.6"/></svg></div>
<div class="sb" style="top:2888px;height:18px"></div>

<!-- 18 稀土 -->
<div class="s" style="top:2912px;height:110px"></div>
<div class="rl" style="top:2912px;width:128px"></div>
<div class="t" style="top:2918px">稀土现货价格</div>
<div class="sel" style="top:2919px">精矿</div>
<div class="lk" style="top:2920px;left:393px"><i class="q">?</i>价格说明</div>
<div class="lk" style="top:2920px;left:478px"><svg width="14" height="14" viewBox="0 0 14 14"><path d="M1 6h4l2-4 2 1-1 3h4l-1 6H4L1 9z" fill="none" stroke="#3d6fd4" stroke-width="1.4"/></svg>API申</div>
<div class="lk" style="top:2920px;left:558px"><svg width="13" height="13" viewBox="0 0 13 13"><path d="M1 5V1h4M8 1h4v4M12 8v4H8M5 12H1V8" fill="none" stroke="#3d6fd4" stroke-width="1.6"/></svg>全屏查看</div>
<div class="r" style="top:2939px"><div class="n">碳酸稀土<b class="i">i</b></div><div class="p">48200~48600</div><div class="a">48400</div><i class="y">¥</i><div class="c">0</div><div class="u">元/吨</div><div class="d">09-16</div><svg class="k" width="16" height="16" viewBox="0 0 16 16"><path d="M1 0v15h15M3 12l4-5 3 3 5-6" fill="none" stroke="#2f5fc0" stroke-width="1.6"/></svg></div>
<div class="r b e" style="top:2983px"><div class="n">中钇富铕矿<b class="i">i</b></div><div class="p">272000~274000</div><div class="a">273000</div><i class="y">¥</i><div class="c">0</div><div class="u">元/吨</div><div class="d">09-16</div><svg class="k" width="16" height="16" viewBox="0 0 16 16"><path d="M1 0v15h15M3 12l4-5 3 3 5-6" fill="none" stroke="#2f5fc0" stroke-width="1.6"/></svg></div>
<div class="sb" style="top:2969px;height:50px"></div>

<!-- 19 废金属 -->
<div class="s" style="top:3024px;height:168px"></div>
<div class="rl" style="top:3024px;width:146px"></div>
<div class="t" style="top:3030px">废金属现货价格</div>
<div class="o" style="top:3032px;left:160px">企业报价</div>
<div class="sel" style="top:3031px;left:357px">上海废铝</div>
<div class="lk" style="top:3032px;left:479px"><svg width="14" height="14" viewBox="0 0 14 14"><path d="M1 6h4l2-4 2 1-1 3h4l-1 6H4L1 9z" fill="none" stroke="#3d6fd4" stroke-width="1.4"/></svg>AP</div>
<div class="lk" style="top:3032px;left:558px"><svg width="13" height="13" viewBox="0 0 13 13"><path d="M1 5V1h4M8 1h4v4M12 8v4H8M5 12H1V8" fill="none" stroke="#3d6fd4" stroke-width="1.6"/></svg>全屏查看</div>
<div class="r rd" style="top:3056px"><div class="n"><span>干净割胶铝线(上海)<b class="i">i</b></span></div><div class="p">16150~16350</div><div class="a">16250</div><i class="y">¥</i><div class="c">+100</div><div class="u">元/吨</div><div class="d">09-16</div><svg class="k" width="16" height="16" viewBox="0 0 16 16"><path d="M1 0v15h15M3 12l4-5 3 3 5-6" fill="none" stroke="#2f5fc0" stroke-width="1.6"/></svg></div>
<div class="r rd b" style="top:3101px"><div class="n">型材喷涂料<b class="i">i</b></div><div class="p">14550~14700</div><div class="a">14625</div><i class="y">¥</i><div class="c">+75</div><div class="u">元/吨</div><div class="d">09-16</div><svg class="k" width="16" height="16" viewBox="0 0 16 16"><path d="M1 0v15h15M3 12l4-5 3 3 5-6" fill="none" stroke="#2f5fc0" stroke-width="1.6"/></svg></div>
<div class="r rd" style="top:3145px"><div class="n">型材毛料<b class="i">i</b></div><div class="p">13850~14000</div><div class="a">13925</div><i class="y">¥</i><div class="c">+75</div><div class="u">元/吨</div><div class="d">09-16</div><svg class="k" width="16" height="16" viewBox="0 0 16 16"><path d="M1 0v15h15M3 12l4-5 3 3 5-6" fill="none" stroke="#2f5fc0" stroke-width="1.6"/></svg></div>

</body></html>
